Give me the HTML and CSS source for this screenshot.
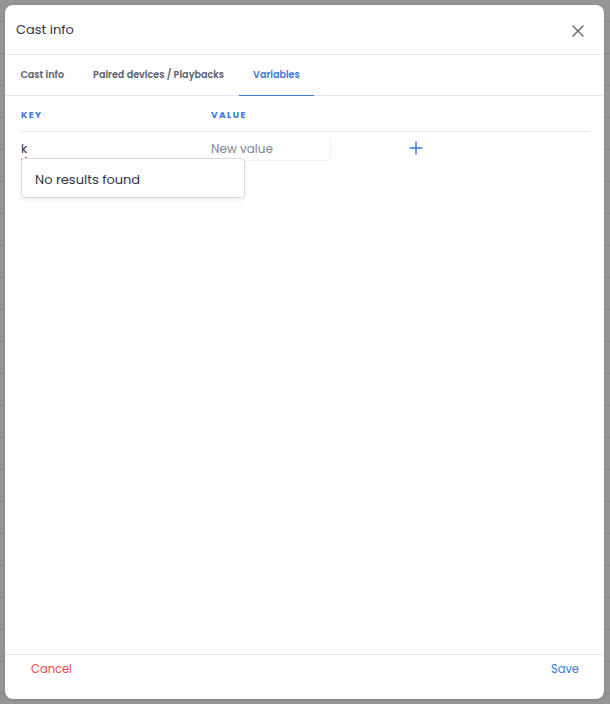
FILE: index.html
```html
<!DOCTYPE html>
<html>
<head>
    <title>Cast info</title>
    <link rel="stylesheet" href="styles.css">
</head>
<body>
    <div class="overlay">
        <div class="modal">
            <div class="modal-header">
                <h2 class="modal-title">Cast info</h2>
                <button class="close-btn" type="button" aria-label="Close">
                    <svg width="12" height="12" viewBox="0 0 12 12">
                        <path d="M1 1 L11 11 M11 1 L1 11" stroke="#5b6375" stroke-width="1.4" stroke-linecap="round"/>
                    </svg>
                </button>
            </div>

            <div class="tabs">
                <div class="tab">Cast info</div>
                <div class="tab">Paired devices / Playbacks</div>
                <div class="tab active">Variables</div>
            </div>

            <div class="modal-body">
                <div class="var-table">
                    <div class="var-row head">
                        <div class="col-key">Key</div>
                        <div class="col-value">Value</div>
                        <div class="col-action"></div>
                    </div>
                    <div class="var-row">
                        <div class="col-key key-cell">
                            <span class="key-input">k</span>
                            <div class="dropdown">No results found</div>
                        </div>
                        <div class="col-value">
                            <span class="value-input">New value</span>
                        </div>
                        <div class="col-action">
                            <svg width="14" height="14" viewBox="0 0 14 14">
                                <path d="M7 0.5 V13.5 M0.5 7 H13.5" stroke="#3b78e0" stroke-width="1.5"/>
                            </svg>
                        </div>
                    </div>
                </div>
            </div>

            <div class="modal-footer">
                <button class="btn-cancel" type="button">Cancel</button>
                <button class="btn-save" type="button">Save</button>
            </div>
        </div>
    </div>
</body>
</html>
```

FILE: styles.css
```css
body {
    margin: 0;
    font-family: 'Poppins', 'Open Sans', sans-serif;
    background-color: #959595;
    background-image: repeating-linear-gradient(to bottom, transparent 0, transparent 21px, #878787 21px, #878787 22px, transparent 22px, transparent 32px);
    height: 704px;
    overflow: hidden;
}
.overlay {
    padding: 5px 6px 5px 5px;
    height: 694px;
}
.modal {
    background-color: #fff;
    border-radius: 8px;
    height: 694px;
    display: flex;
    flex-direction: column;
    box-shadow: 0 1px 3px rgba(0, 0, 0, 0.15);
}
.modal-header {
    height: 49px;
    display: flex;
    align-items: center;
    justify-content: space-between;
    padding: 0 16px 0 11px;
    border-bottom: 1px solid #e3e6ec;
}
.modal-title {
    margin: 0;
    font-size: 13px;
    font-weight: 400;
    color: #2f3440;
}
.close-btn {
    border: none;
    background: none;
    padding: 0;
    width: 20px;
    height: 20px;
    display: flex;
    align-items: center;
    justify-content: center;
    cursor: pointer;
    margin-top: 2px;
}
.tabs {
    display: flex;
    height: 40px;
    padding-left: 1px;
    border-bottom: 1px solid #e3e6ec;
}
.tab {
    padding: 0 14.5px;
    font-size: 9.6px;
    font-weight: 600;
    color: #5a6272;
    display: flex;
    align-items: center;
    border-bottom: 1px solid transparent;
    margin-bottom: -1px;
}
.tab.active {
    color: #3b78e0;
    border-bottom-color: #3b78e0;
}
.modal-body {
    flex: 1;
    padding: 0 14px 0 15px;
}
.var-table {
    width: 100%;
}
.var-row {
    display: flex;
    align-items: center;
}
.var-row.head {
    height: 35px;
    border-bottom: 1px solid #e3e6ec;
    font-size: 9px;
    font-weight: 700;
    letter-spacing: 1.4px;
    text-transform: uppercase;
    color: #3b78e0;
}
.var-row.head .col-key,
.var-row.head .col-value {
    padding-top: 3px;
}
.col-key {
    width: 190px;
    padding-left: 1px;
}
.col-value {
    width: 191px;
}
.col-action {
    display: flex;
    align-items: center;
    padding-left: 7px;
}
.var-row:not(.head) {
    height: 31px;
}
.key-cell {
    position: relative;
}
.key-input {
    font-size: 12px;
    color: #2f3440;
    text-decoration: underline wavy #e04848;
    text-decoration-thickness: 1px;
    text-underline-offset: 3px;
}
.value-input {
    display: inline-block;
    width: 119px;
    padding: 1px 0 2px 0;
    font-size: 12px;
    color: #7d8594;
    border-bottom: 1px solid #f0f1f4;
    border-right: 1px solid #f0f1f4;
    border-radius: 0 0 4px 0;
}
.dropdown {
    position: absolute;
    top: 23px;
    left: 1px;
    width: 209px;
    height: 35px;
    padding: 3px 0 0 13px;
    display: flex;
    align-items: center;
    font-size: 13px;
    color: #2f3440;
    background-color: #fff;
    border: 1px solid #d8dce6;
    border-radius: 4px;
    box-shadow: 0 2px 4px rgba(0, 0, 0, 0.08);
}
.modal-footer {
    height: 45px;
    border-top: 1px solid #e3e6ec;
    display: flex;
    justify-content: space-between;
    align-items: flex-start;
    padding: 6px 25px 0 26px;
    box-sizing: border-box;
}
.btn-cancel,
.btn-save {
    border: none;
    background: none;
    padding: 0;
    font-family: inherit;
    font-size: 11.5px;
    cursor: pointer;
}
.btn-cancel {
    color: #f0494f;
}
.btn-save {
    color: #3b78e0;
}
```
